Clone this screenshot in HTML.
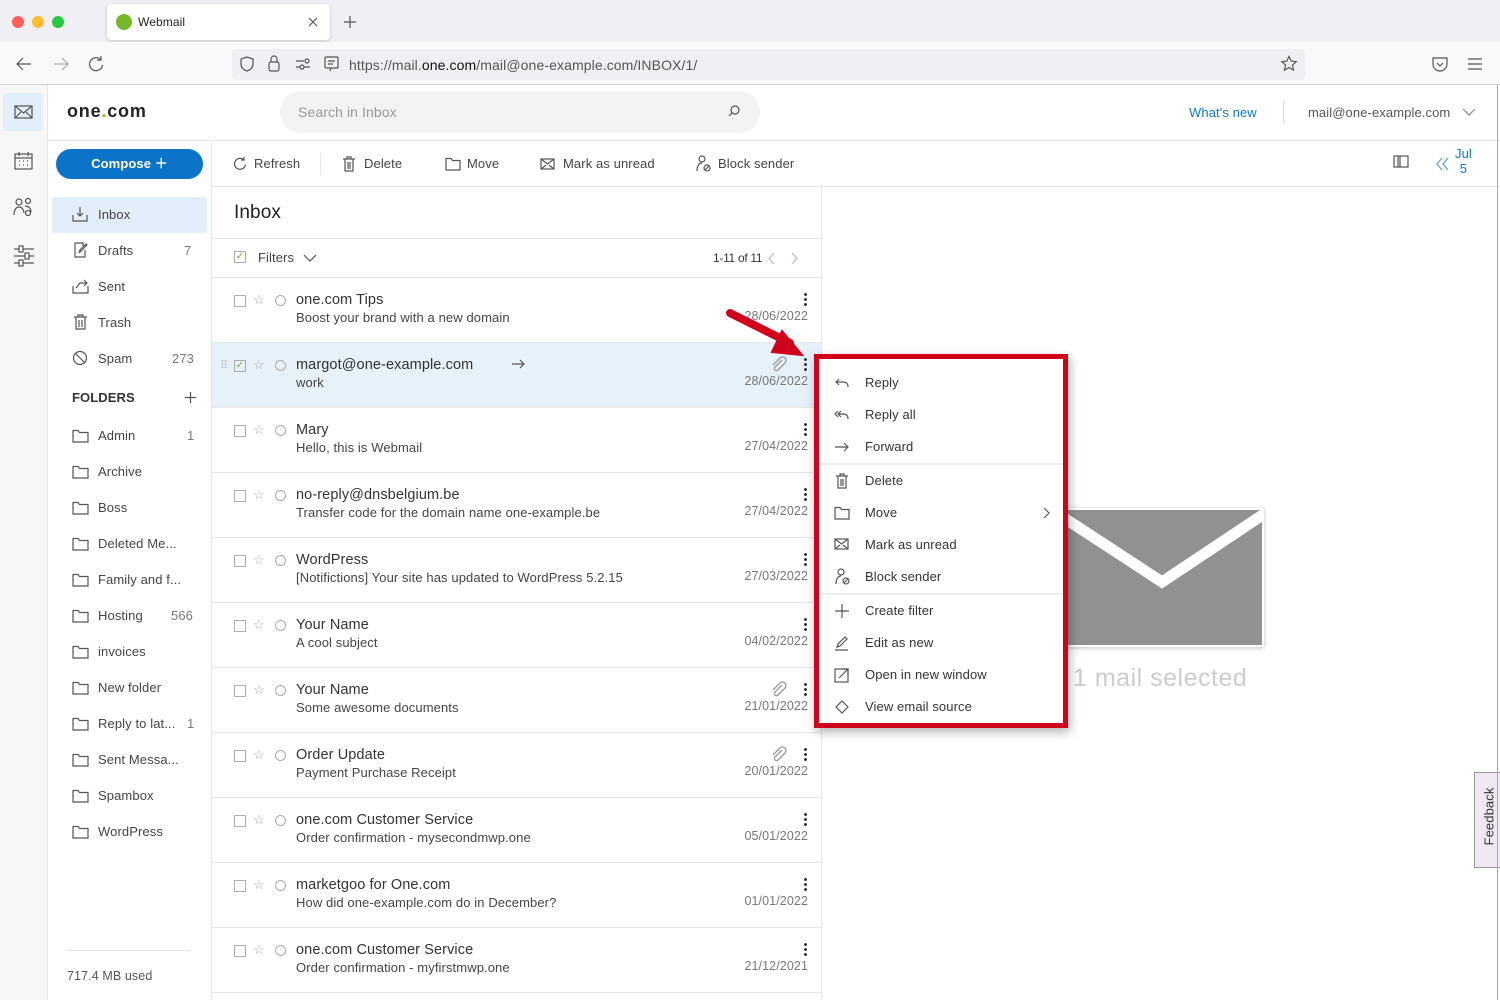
<!DOCTYPE html>
<html><head><meta charset="utf-8"><style>
*{box-sizing:border-box;margin:0;padding:0}
body{width:1500px;height:1000px;overflow:hidden;font-family:"Liberation Sans",sans-serif;color:#333;background:#fff;position:relative;letter-spacing:.1px}
.abs{position:absolute}
svg{position:absolute;fill:none;stroke:#555;stroke-width:1.2}
.row{position:absolute;left:212px;width:609px;height:65px;border-bottom:1px solid #e8e8e8}
.row .cb{position:absolute;left:22px;top:17px;width:12px;height:12px;border:1px solid #aaa}
.row .st{position:absolute;left:41px;top:14px;font-size:13px;color:#aaa;font-style:normal}
.row .ci{position:absolute;left:63px;top:17px;width:11px;height:11px;border:1px solid #aaa;border-radius:50%}
.row .n{position:absolute;left:84px;top:14px;font-size:14.5px;color:#333}
.row .s{position:absolute;left:84px;top:32px;font-size:13px;color:#444}
.row .d{position:absolute;right:13px;top:31px;font-size:12.5px;color:#777}
.row .k{position:absolute;right:14px;top:14px;width:3px;height:14px;background:radial-gradient(circle,#333 1.3px,transparent 1.6px) 0 0/3px 5px repeat-y}
.fl{position:absolute;left:72px;font-size:13px;color:#444}
.fl span{position:absolute;left:26px;top:0;white-space:nowrap}
.fl b{position:absolute;left:115px;font-weight:normal;color:#777;width:0;white-space:nowrap}
.fi{position:absolute;left:0;top:1px;width:17px;height:14px}
.mi{position:absolute;left:865px;font-size:13px;color:#333}
.tb{position:absolute;top:156px;font-size:13px;color:#444}
</style></head><body>
<svg width="0" height="0" style="position:absolute"><defs><symbol id="fo" viewBox="0 0 17 14"><path d="M1 1.5h5l1.5 2H16V13H1z" fill="none" stroke="#555" stroke-width="1.2"/></symbol><symbol id="pc" viewBox="0 0 18 18"><path d="M13 5L6 12a2 2 0 0 0 3 3l7-7a3.5 3.5 0 0 0-5-5L4 10" fill="none" stroke="#999" stroke-width="1.3"/></symbol></defs></svg>
<!-- browser chrome -->
<div class="abs" style="left:0;top:0;width:1500px;height:42px;background:#f0f0f4"></div>
<div class="abs" style="left:12px;top:16px;width:12px;height:12px;border-radius:50%;background:#fe5f57"></div>
<div class="abs" style="left:32px;top:16px;width:12px;height:12px;border-radius:50%;background:#febc2e"></div>
<div class="abs" style="left:52px;top:16px;width:12px;height:12px;border-radius:50%;background:#28c840"></div>
<div class="abs" style="left:107px;top:4px;width:223px;height:36px;background:#fff;border-radius:4px;box-shadow:0 1px 3px rgba(0,0,0,.2)"></div>
<div class="abs" style="left:116px;top:14px;width:16px;height:16px;border-radius:50%;background:#76b82a"></div>
<div class="abs" style="left:138px;top:15px;font-size:12px;color:#222">Webmail</div>
<svg style="left:307px;top:16px" width="12" height="12"><path d="M2 2l8 8M10 2l-8 8"/></svg>
<svg style="left:343px;top:15px" width="14" height="14"><path d="M7 1v12M1 7h12"/></svg>
<div class="abs" style="left:0;top:42px;width:1500px;height:43px;background:#f9f9fb;border-bottom:1px solid #cfcfd8"></div>
<svg style="left:15px;top:56px" width="18" height="16"><path d="M16 8H2M8 2L2 8l6 6"/></svg>
<svg style="left:52px;top:56px" width="18" height="16"><path d="M2 8h14M10 2l6 6-6 6" stroke="#aaa"/></svg>
<svg style="left:87px;top:55px" width="18" height="18"><path d="M14 5a6.5 6.5 0 1 0 1.5 5M14 1v4h-4"/></svg>
<div class="abs" style="left:232px;top:49px;width:1073px;height:31px;background:#f0f0f4;border-radius:4px"></div>
<svg style="left:238px;top:55px" width="18" height="18"><path d="M9 2 L15 4 V9 Q15 14 9 16 Q3 14 3 9 V4Z"/></svg>
<svg style="left:266px;top:54px" width="16" height="20"><rect x="3" y="8" width="10" height="9" rx="2"/><path d="M5 8V5a3 3 0 0 1 6 0v3"/></svg>
<svg style="left:294px;top:57px" width="18" height="14"><path d="M2 4h8M2 10h4M10 10h6"/><circle cx="13" cy="4" r="2"/><circle cx="8" cy="10" r="2"/></svg>
<svg style="left:323px;top:55px" width="18" height="18"><rect x="2" y="2" width="13" height="11" rx="1"/><path d="M5 6h7M5 9h5M8 13l-1 3"/></svg>
<div class="abs" style="left:349px;top:57px;font-size:14px;color:#555">https://mail.<span style="color:#111">one.com</span>/mail@one-example.com/INBOX/1/</div>
<svg style="left:1280px;top:55px" width="18" height="18"><path d="M9 1.5l2.2 4.6 5 .6-3.7 3.4 1 5L9 12.6 4.5 15.1l1-5L1.8 6.7l5-.6z"/></svg>
<svg style="left:1431px;top:55px" width="18" height="18"><path d="M2 3h14v6a7 7 0 0 1-14 0z M6 8l3 3 3-3"/></svg>
<svg style="left:1467px;top:57px" width="16" height="14"><path d="M1 2h14M1 7h14M1 12h14"/></svg>
<!-- rail -->
<div class="abs" style="left:0;top:85px;width:48px;height:915px;background:#f7f7f7;border-right:1px solid #e6e6e6"></div>
<div class="abs" style="left:3px;top:93px;width:40px;height:38px;background:#e2eef9;border-radius:3px"></div>
<svg style="left:14px;top:105px" width="20" height="16"><rect x="1" y="1" width="17" height="12"/><path d="M1 1l8.5 7 8.5-7M1 13l6-6M18 13l-6-6"/></svg>
<svg style="left:14px;top:151px" width="20" height="20"><rect x="1" y="3" width="17" height="15"/><path d="M1 7h17M5 1v4M14 1v4M5 10h1M9 10h1M13 10h1M5 14h1M9 14h1M13 14h1"/></svg>
<svg style="left:13px;top:197px" width="22" height="22"><circle cx="6" cy="5" r="3"/><circle cx="15" cy="4" r="2.5"/><path d="M1 18c0-5 2-8 5-8s5 3 5 6M12 9c3 0 6 2 6 6"/><circle cx="15" cy="16" r="2.5"/></svg>
<svg style="left:13px;top:245px" width="22" height="22"><path d="M1 4h20M1 11h20M1 18h20"/><rect x="6" y="1" width="4" height="6" fill="#f7f7f7"/><rect x="12" y="8" width="4" height="6" fill="#f7f7f7"/><rect x="6" y="15" width="4" height="6" fill="#f7f7f7"/></svg>
<!-- header -->
<div class="abs" style="left:48px;top:140px;width:1452px;border-top:1px solid #e6e6e6"></div>
<div class="abs" style="left:67px;top:101px;font-size:18px;font-weight:bold;color:#222;letter-spacing:.8px">one<span style="color:#76b82a">.</span>com</div>
<div class="abs" style="left:280px;top:91px;width:480px;height:42px;background:#f3f3f3;border-radius:21px"></div>
<div class="abs" style="left:298px;top:104px;font-size:14px;color:#999">Search in Inbox</div>
<svg style="left:727px;top:104px" width="14" height="14"><circle cx="8" cy="6" r="4"/><path d="M5 9l-3 3"/></svg>
<div class="abs" style="left:1189px;top:105px;font-size:13px;color:#0b78d0">What's new</div>
<div class="abs" style="left:1283px;top:101px;height:22px;border-left:1px solid #ddd"></div>
<div class="abs" style="left:1308px;top:105px;font-size:13px;color:#555">mail@one-example.com</div>
<svg style="left:1462px;top:107px" width="14" height="10"><path d="M1 2l6 6 6-6" stroke="#888"/></svg>
<!-- sidebar -->
<div class="abs" style="left:211px;top:141px;height:859px;border-left:1px solid #e6e6e6"></div>
<div class="abs" style="left:56px;top:149px;width:147px;height:30px;background:#0b73c8;border-radius:15px;color:#fff;font-size:13px;font-weight:bold;text-align:center;line-height:30px">Compose ＋</div>
<div class="abs" style="left:52px;top:197px;width:155px;height:36px;background:#e2eef9;border-radius:3px"></div>
<svg style="left:72px;top:206px" width="16" height="16"><path d="M8 1v9M5 7l3 3 3-3M1 9v6h14V9"/></svg>
<div class="abs" style="left:98px;top:207px;font-size:13px;color:#444">Inbox</div>
<svg style="left:72px;top:242px" width="16" height="16"><path d="M3 1h8v3M3 1v14h10V8M7 11l1-3 6-6 1 1-6 6z"/></svg>
<div class="abs" style="left:98px;top:243px;font-size:13px;color:#444">Drafts</div><div class="abs" style="left:184px;top:243px;font-size:13px;color:#777">7</div>
<svg style="left:72px;top:278px" width="18" height="16"><path d="M1 8v7h15V8M4 10l4-5h7M12 2l3 3-3 3"/></svg>
<div class="abs" style="left:98px;top:279px;font-size:13px;color:#444">Sent</div>
<svg style="left:73px;top:314px" width="16" height="16"><path d="M1 3h13M5 3V1h5v2M3 3v12h9V3M6 6v7M9 6v7"/></svg>
<div class="abs" style="left:98px;top:315px;font-size:13px;color:#444">Trash</div>
<svg style="left:72px;top:350px" width="16" height="16"><circle cx="8" cy="8" r="6.5"/><path d="M3.5 3.5l9 9"/></svg>
<div class="abs" style="left:98px;top:351px;font-size:13px;color:#444">Spam</div><div class="abs" style="left:172px;top:351px;font-size:13px;color:#777">273</div>
<div class="abs" style="left:72px;top:390px;font-size:13px;font-weight:bold;color:#333">FOLDERS</div>
<svg style="left:184px;top:391px" width="13" height="13"><path d="M6.5 1v11M1 6.5h11"/></svg>
<div class="fl" style="top:428px"><svg class="fi"><use href="#fo"/></svg><span>Admin</span><b>1</b></div>
<div class="fl" style="top:464px"><svg class="fi"><use href="#fo"/></svg><span>Archive</span></div>
<div class="fl" style="top:500px"><svg class="fi"><use href="#fo"/></svg><span>Boss</span></div>
<div class="fl" style="top:536px"><svg class="fi"><use href="#fo"/></svg><span>Deleted Me...</span></div>
<div class="fl" style="top:572px"><svg class="fi"><use href="#fo"/></svg><span>Family and f...</span></div>
<div class="fl" style="top:608px"><svg class="fi"><use href="#fo"/></svg><span>Hosting</span><b style="left:99px">566</b></div>
<div class="fl" style="top:644px"><svg class="fi"><use href="#fo"/></svg><span>invoices</span></div>
<div class="fl" style="top:680px"><svg class="fi"><use href="#fo"/></svg><span>New folder</span></div>
<div class="fl" style="top:716px"><svg class="fi"><use href="#fo"/></svg><span>Reply to lat...</span><b>1</b></div>
<div class="fl" style="top:752px"><svg class="fi"><use href="#fo"/></svg><span>Sent Messa...</span></div>
<div class="fl" style="top:788px"><svg class="fi"><use href="#fo"/></svg><span>Spambox</span></div>
<div class="fl" style="top:824px"><svg class="fi"><use href="#fo"/></svg><span>WordPress</span></div>
<div class="abs" style="left:67px;top:950px;width:124px;border-top:1px solid #e6e6e6"></div>
<div class="abs" style="left:67px;top:969px;font-size:12.5px;color:#555">717.4 MB used</div>
<!-- toolbar -->
<div class="abs" style="left:212px;top:186px;width:1288px;border-top:1px solid #e6e6e6"></div>
<svg style="left:232px;top:156px" width="16" height="16"><path d="M12 4a5.5 5.5 0 1 0 1.5 4.5M12 1v3h-3"/></svg>
<div class="tb" style="left:254px">Refresh</div>
<div class="abs" style="left:320px;top:153px;height:22px;border-left:1px solid #e6e6e6"></div>
<svg style="left:342px;top:156px" width="14" height="16"><path d="M1 3h12M5 3V1h4v2M3 3v12h8V3M6 6v7M8 6v7"/></svg>
<div class="tb" style="left:364px">Delete</div>
<svg style="left:445px;top:157px" width="16" height="14"><path d="M1 1.5h5l1.5 2H15V13H1z"/></svg>
<div class="tb" style="left:467px">Move</div>
<svg style="left:540px;top:158px" width="16" height="12"><rect x="1" y="1" width="13" height="10"/><path d="M1 1l6.5 5 6.5-5M1 11l5-4M14 11l-5-4"/></svg>
<div class="tb" style="left:563px">Mark as unread</div>
<svg style="left:696px;top:155px" width="16" height="18"><circle cx="6" cy="4" r="3"/><path d="M1 16c0-5 2-8 5-8"/><circle cx="11" cy="13" r="3"/><path d="M9 15l4-4"/></svg>
<div class="tb" style="left:718px">Block sender</div>
<svg style="left:1393px;top:155px" width="16" height="13"><rect x="1" y="1" width="14" height="11"/><path d="M5 1v11M7 1v11"/></svg>
<svg style="left:1435px;top:157px" width="16" height="14"><path d="M7 1L2 7l5 6M13 1L8 7l5 6" stroke="#5aa2e0"/></svg>
<div class="abs" style="left:1455px;top:146px;font-size:13px;color:#0b78d0;text-align:center;line-height:15px">Jul<br>5</div>
<!-- list -->
<div class="abs" style="left:821px;top:187px;height:813px;border-left:1px solid #e6e6e6"></div>
<div class="abs" style="left:234px;top:202px;font-size:19px;color:#222">Inbox</div>
<div class="abs" style="left:212px;top:238px;width:609px;border-top:1px solid #e6e6e6"></div>
<div class="abs" style="left:234px;top:251px;width:12px;height:12px;border:1px solid #aaa;color:#76b82a;font-size:10px;line-height:10px;text-align:center">✓</div>
<div class="abs" style="left:258px;top:250px;font-size:13px;color:#444">Filters</div>
<svg style="left:303px;top:253px" width="14" height="10"><path d="M1 2l6 6 6-6"/></svg>
<div class="abs" style="left:713px;top:251px;font-size:12px;color:#333;letter-spacing:-.3px">1-11 of 11</div>
<svg style="left:767px;top:252px" width="10" height="13"><path d="M7 1L2 6.5 7 12" stroke="#bbb"/></svg>
<svg style="left:789px;top:252px" width="10" height="13"><path d="M3 1l5 5.5L3 12" stroke="#bbb"/></svg>
<div class="abs" style="left:212px;top:277px;width:609px;border-top:1px solid #e6e6e6"></div>
<div class="row" style="top:278px"><i class="cb"></i><i class="st">☆</i><i class="ci"></i><div class="n">one.com Tips</div><div class="s">Boost your brand with a new domain</div><div class="d">28/06/2022</div><i class="k"></i></div>
<div class="row" style="top:343px;background:#e6f1fa"><div class="abs" style="left:8px;top:16px;color:#bbb;font-size:11px">⠿</div><i class="cb" style="color:#76b82a;font-size:10px;line-height:10px;text-align:center;font-style:normal">✓</i><i class="st">☆</i><i class="ci"></i><div class="n">margot@one-example.com</div><svg style="left:299px;top:16px" width="14" height="10"><path d="M1 5h12M9 1l4 4-4 4"/></svg><div class="s">work</div><div class="d">28/06/2022</div><svg style="left:557px;top:12px" width="18" height="18"><use href="#pc"/></svg><i class="k"></i></div>
<div class="row" style="top:408px"><i class="cb"></i><i class="st">☆</i><i class="ci"></i><div class="n">Mary</div><div class="s">Hello, this is Webmail</div><div class="d">27/04/2022</div><i class="k"></i></div>
<div class="row" style="top:473px"><i class="cb"></i><i class="st">☆</i><i class="ci"></i><div class="n">no-reply@dnsbelgium.be</div><div class="s">Transfer code for the domain name one-example.be</div><div class="d">27/04/2022</div><i class="k"></i></div>
<div class="row" style="top:538px"><i class="cb"></i><i class="st">☆</i><i class="ci"></i><div class="n">WordPress</div><div class="s">[Notifictions] Your site has updated to WordPress 5.2.15</div><div class="d">27/03/2022</div><i class="k"></i></div>
<div class="row" style="top:603px"><i class="cb"></i><i class="st">☆</i><i class="ci"></i><div class="n">Your Name</div><div class="s">A cool subject</div><div class="d">04/02/2022</div><i class="k"></i></div>
<div class="row" style="top:668px"><i class="cb"></i><i class="st">☆</i><i class="ci"></i><div class="n">Your Name</div><div class="s">Some awesome documents</div><div class="d">21/01/2022</div><svg style="left:557px;top:12px" width="18" height="18"><use href="#pc"/></svg><i class="k"></i></div>
<div class="row" style="top:733px"><i class="cb"></i><i class="st">☆</i><i class="ci"></i><div class="n">Order Update</div><div class="s">Payment Purchase Receipt</div><div class="d">20/01/2022</div><svg style="left:557px;top:12px" width="18" height="18"><use href="#pc"/></svg><i class="k"></i></div>
<div class="row" style="top:798px"><i class="cb"></i><i class="st">☆</i><i class="ci"></i><div class="n">one.com Customer Service</div><div class="s">Order confirmation - mysecondmwp.one</div><div class="d">05/01/2022</div><i class="k"></i></div>
<div class="row" style="top:863px"><i class="cb"></i><i class="st">☆</i><i class="ci"></i><div class="n">marketgoo for One.com</div><div class="s">How did one-example.com do in December?</div><div class="d">01/01/2022</div><i class="k"></i></div>
<div class="row" style="top:928px"><i class="cb"></i><i class="st">☆</i><i class="ci"></i><div class="n">one.com Customer Service</div><div class="s">Order confirmation - myfirstmwp.one</div><div class="d">21/12/2021</div><i class="k"></i></div>
<!-- preview -->
<div class="abs" style="left:1058px;top:508px;width:206px;height:139px;background:#919191;border:2px solid #fff;box-shadow:0 1px 4px rgba(0,0,0,.25);overflow:hidden">
<svg style="left:0;top:0" width="206" height="139"><path d="M-5 2L102 72 207 2" stroke="#fff" stroke-width="11"/></svg></div>
<div class="abs" style="left:1073px;top:664px;font-size:25px;color:#ccc;letter-spacing:.5px">1 mail selected</div>
<div class="abs" style="left:1474px;top:772px;width:26px;height:96px;background:#efe8f3;border:1px solid #999;border-right:none"></div>
<div class="abs" style="left:1441px;top:809px;width:96px;transform:rotate(-90deg);font-size:13px;color:#333;text-align:center">Feedback</div>
<div class="abs" style="left:1497px;top:85px;height:915px;border-left:1px solid #aaa"></div>
<!-- context menu -->
<div class="abs" style="left:814px;top:354px;width:254px;height:374px;border:5px solid #d0021b;background:#fff;box-shadow:2px 4px 10px rgba(0,0,0,.3)"></div>
<div class="abs" style="left:819px;top:463px;width:244px;border-top:2px solid #eee"></div>
<div class="abs" style="left:819px;top:593px;width:244px;border-top:2px solid #eee"></div>
<svg style="left:834px;top:376px" width="16" height="14"><path d="M14 11c0-4-2-5-5-5H2M5 3L2 6l3 3"/></svg><div class="mi" style="top:375px">Reply</div>
<svg style="left:834px;top:408px" width="16" height="14"><path d="M14 11c0-4-2-5-5-5H4M7 3L4 6l3 3M4 3L1 6l3 3"/></svg><div class="mi" style="top:407px">Reply all</div>
<svg style="left:834px;top:441px" width="16" height="12"><path d="M1 6h13M10 2l4 4-4 4"/></svg><div class="mi" style="top:439px">Forward</div>
<svg style="left:835px;top:473px" width="14" height="16"><path d="M1 3h12M5 3V1h4v2M3 3v12h8V3M6 6v7M8 6v7"/></svg><div class="mi" style="top:473px">Delete</div>
<svg style="left:834px;top:506px" width="16" height="14"><path d="M1 1.5h5l1.5 2H15V13H1z"/></svg><div class="mi" style="top:505px">Move</div>
<svg style="left:1042px;top:507px" width="10" height="12"><path d="M2 1l5 5-5 5"/></svg>
<svg style="left:834px;top:538px" width="16" height="12"><rect x="1" y="1" width="13" height="10"/><path d="M1 1l6.5 5 6.5-5M1 11l5-4M14 11l-5-4"/></svg><div class="mi" style="top:537px">Mark as unread</div>
<svg style="left:835px;top:568px" width="16" height="18"><circle cx="6" cy="4" r="3"/><path d="M1 16c0-5 2-8 5-8"/><circle cx="11" cy="13" r="3"/><path d="M9 15l4-4"/></svg><div class="mi" style="top:569px">Block sender</div>
<svg style="left:834px;top:603px" width="16" height="16"><path d="M8 1v14M1 8h14"/></svg><div class="mi" style="top:603px">Create filter</div>
<svg style="left:834px;top:635px" width="16" height="16"><path d="M1 15h13M3 12l1-3 7-7 2 2-7 7z"/></svg><div class="mi" style="top:635px">Edit as new</div>
<svg style="left:834px;top:667px" width="16" height="16"><rect x="1" y="2" width="13" height="13"/><path d="M5 11l9-9M9 2h5v5"/></svg><div class="mi" style="top:667px">Open in new window</div>
<svg style="left:834px;top:700px" width="16" height="14"><path d="M8 1l6 6-6 6-6-6z"/></svg><div class="mi" style="top:699px">View email source</div>
<!-- red arrow -->
<svg style="left:720px;top:305px" width="95" height="55"><path d="M10 8L70 38" stroke="#d0021b" stroke-width="8" stroke-linecap="round"/><path d="M62 26L82 50 52 47z" fill="#d0021b" stroke="#d0021b" stroke-width="2"/></svg>
</body></html>
